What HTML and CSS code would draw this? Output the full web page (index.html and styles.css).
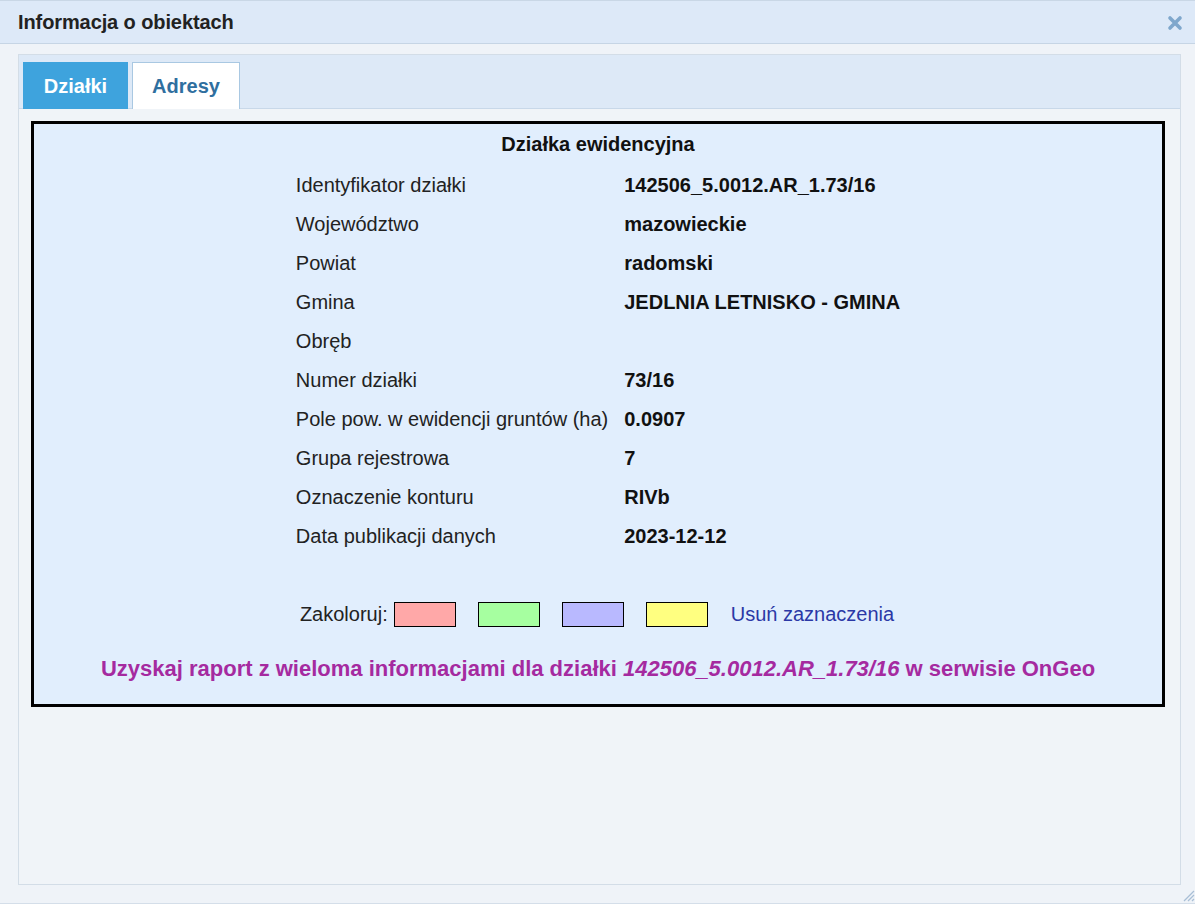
FILE: index.html
```html
<!DOCTYPE html>
<html lang="pl">
<head>
<meta charset="utf-8">
<title>Informacja o obiektach</title>
<link rel="stylesheet" href="styles.css">
</head>
<body>
<div class="window">
  <div class="titlebar">
    <span class="title">Informacja o obiektach</span>
    <svg class="close" width="16" height="16" viewBox="0 0 16 16" aria-hidden="true">
      <path d="M3 3 L13 13 M13 3 L3 13" stroke="#7fa7cc" stroke-width="3.6" stroke-linecap="round"/>
    </svg>
  </div>
  <div class="panel">
    <div class="tabs">
      <div class="tab active">Działki</div>
      <div class="tab">Adresy</div>
    </div>
    <div class="content">
      <div class="box">
        <div class="box-title">Działka ewidencyjna</div>
        <table class="info">
          <tr><td class="lbl">Identyfikator działki</td><td class="val">142506_5.0012.AR_1.73/16</td></tr>
          <tr><td class="lbl">Województwo</td><td class="val">mazowieckie</td></tr>
          <tr><td class="lbl">Powiat</td><td class="val">radomski</td></tr>
          <tr><td class="lbl">Gmina</td><td class="val">JEDLNIA LETNISKO - GMINA</td></tr>
          <tr><td class="lbl">Obręb</td><td class="val"></td></tr>
          <tr><td class="lbl">Numer działki</td><td class="val">73/16</td></tr>
          <tr><td class="lbl">Pole pow. w ewidencji gruntów (ha)</td><td class="val">0.0907</td></tr>
          <tr><td class="lbl">Grupa rejestrowa</td><td class="val">7</td></tr>
          <tr><td class="lbl">Oznaczenie konturu</td><td class="val">RIVb</td></tr>
          <tr><td class="lbl">Data publikacji danych</td><td class="val">2023-12-12</td></tr>
        </table>
        <div class="colorize">
          <span class="cz-label">Zakoloruj:</span>
          <span class="swatch sw-red"></span>
          <span class="swatch sw-green"></span>
          <span class="swatch sw-blue"></span>
          <span class="swatch sw-yellow"></span>
          <a class="clear-link" href="#">Usuń zaznaczenia</a>
        </div>
        <div class="report"><a href="#">Uzyskaj raport z wieloma informacjami dla działki <i>142506_5.0012.AR_1.73/16</i> w serwisie OnGeo</a></div>
      </div>
    </div>
  </div>
  <div class="grip">
    <svg width="14" height="14" viewBox="0 0 14 14" aria-hidden="true">
      <path d="M13 3 L3 13 M13 7 L7 13 M13 11 L11 13" stroke="#a9bfd6" stroke-width="1.3"/>
    </svg>
  </div>
</div>
</body>
</html>
```

FILE: styles.css
```css
* { box-sizing: border-box; }
html, body {
  margin: 0;
  padding: 0;
  width: 1195px;
  height: 904px;
  overflow: hidden;
  background: #eef3f8;
  font-family: "Liberation Sans", Arial, sans-serif;
  color: #222;
}
.window {
  position: relative;
  width: 1195px;
  height: 904px;
  border-top: 1px solid #c9d7e6;
  border-bottom: 1px solid #d4dee9;
  background: #eff3f8;
}
.titlebar {
  height: 43px;
  background: #dde9f8;
  border-bottom: 1px solid #c6d5e5;
  display: flex;
  align-items: center;
  justify-content: space-between;
  padding: 0 12px 0 18px;
}
.title {
  font-size: 20px;
  font-weight: bold;
  color: #222;
  letter-spacing: -0.1px;
}
.close { display: block; margin-top: 2px; }
.panel {
  margin: 10px 14px 0 18px;
  height: 831px;
  border: 1px solid #d3dde7;
  background: #f0f4f8;
  display: flex;
  flex-direction: column;
}
.tabs {
  height: 54px;
  background: #dde9f7;
  border-bottom: 1px solid #c8d8e9;
  display: flex;
  align-items: flex-end;
  gap: 4px;
  padding-left: 4px;
  margin: 0;
}
.tab {
  height: 47px;
  display: flex;
  align-items: center;
  justify-content: center;
  font-size: 20px;
  font-weight: bold;
  color: #2f6f9f;
  background: #fff;
  border: 1px solid #a9c8e2;
  border-bottom: none;
  width: 108px;
  margin-bottom: -1px;
}
.tab.active {
  background: #3ea3dd;
  border-color: #3ea3dd;
  color: #fff;
  width: 105px;
}
.content {
  padding: 12px 15px 0 12px;
}
.box {
  border: 3px solid #000;
  background: #e1eefd;
  height: 586px;
  padding-top: 8px;
}
.box-title {
  text-align: center;
  font-size: 20px;
  font-weight: bold;
  line-height: 24px;
  color: #111;
}
.info {
  margin: 10px auto 0;
  border-collapse: collapse;
  font-size: 20px;
}
.info td {
  height: 39px;
  padding: 0 8px;
  vertical-align: middle;
  white-space: nowrap;
}
.info .lbl { color: #222; padding-right: 8px; }
.info .val { font-weight: bold; color: #111; padding-left: 8px; }
.colorize {
  margin-top: 45px;
  display: flex;
  align-items: center;
  justify-content: center;
  font-size: 20px;
  height: 26px;
  padding-right: 2px;
}
.cz-label { margin-right: 6px; color: #222; }
.swatch {
  width: 62px;
  height: 25px;
  border: 1px solid #000;
  margin-right: 22px;
  display: inline-block;
}
.swatch.sw-yellow { margin-right: 23px; }
.sw-red { background: #ffa8a8; }
.sw-green { background: #a6ffa0; }
.sw-blue { background: #b9b9ff; }
.sw-yellow { background: #ffff80; }
.clear-link {
  color: #2b38a6;
  text-decoration: none;
}
.report {
  margin-top: 30px;
  text-align: center;
  font-size: 22px;
  font-weight: bold;
  line-height: 24px;
}
.report a {
  color: #a52aa0;
  text-decoration: none;
}
.grip {
  position: absolute;
  right: 0;
  bottom: 1px;
  width: 14px;
  height: 14px;
}
.grip svg { display: block; }
```
